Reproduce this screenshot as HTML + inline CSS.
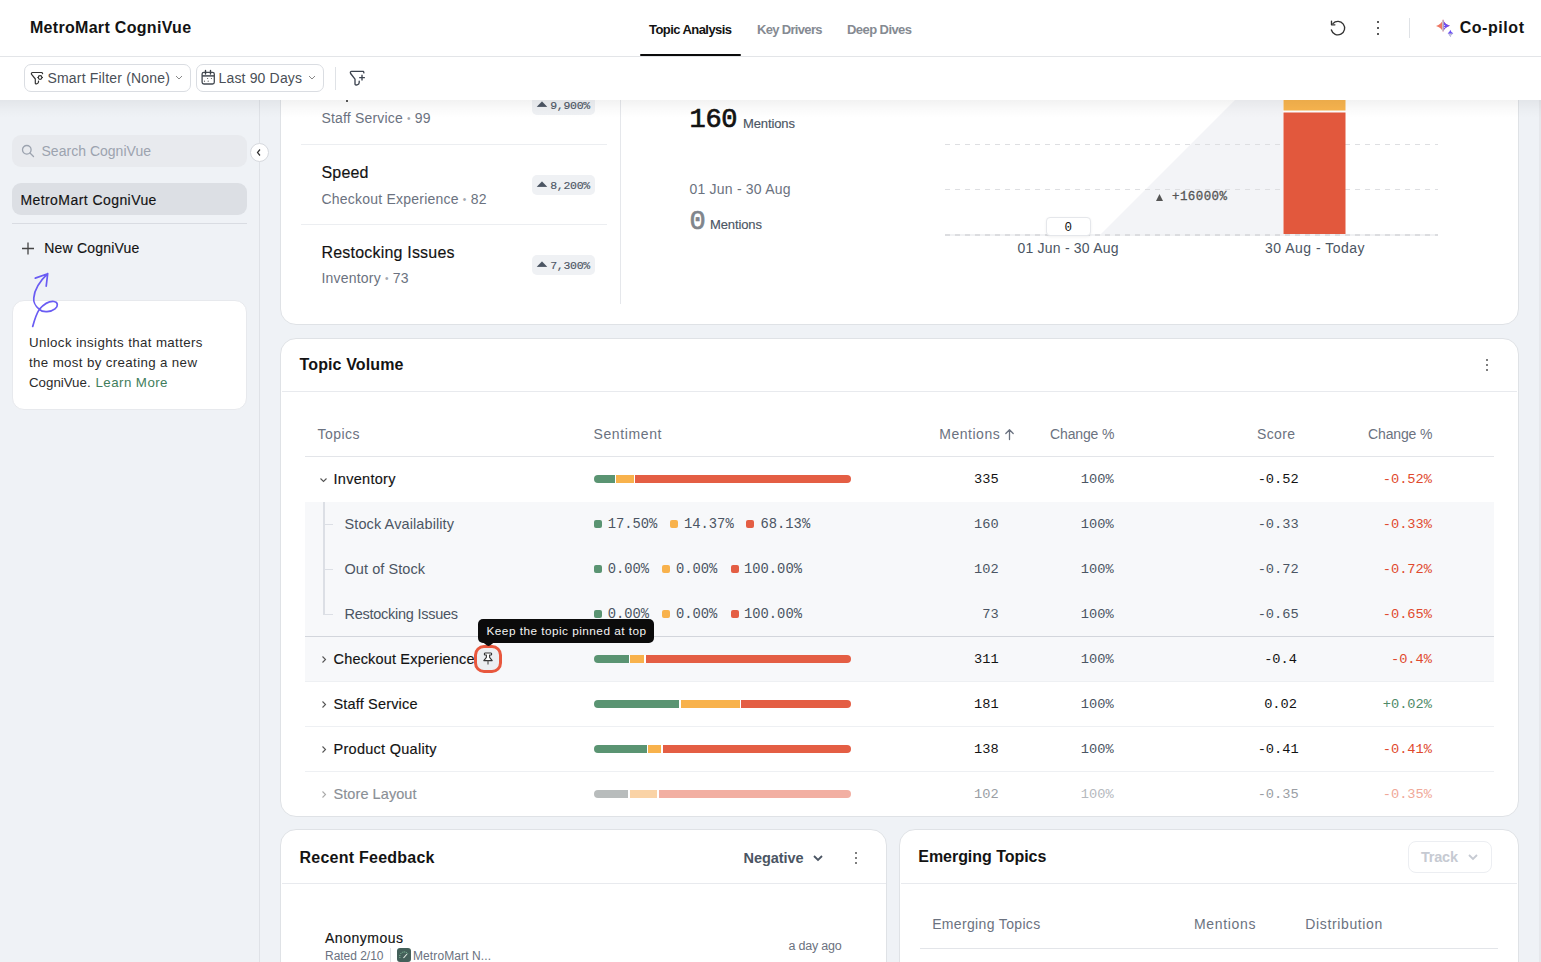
<!DOCTYPE html>
<html><head><meta charset="utf-8"><style>
html,body{margin:0;padding:0;}
body{width:1541px;height:962px;position:relative;overflow:hidden;background:#eff2f6;font-family:"Liberation Sans",sans-serif;}
</style></head><body>
<div style="position:absolute;left:280px;top:40px;width:1239px;height:284.5px;background:#fff;border:1px solid #dfe2e6;border-radius:16px;box-sizing:border-box;"></div>
<span id="t1" style="position:absolute;left:321.50px;top:111.35px;font:400 14.00px/1 'Liberation Sans', sans-serif;color:#6b7280;white-space:nowrap;letter-spacing:0.177px;">Staff Service <span style="color:#a5a9b0;font-size:10px;vertical-align:1px">&#8226;</span> 99</span>
<div style="position:absolute;left:301px;top:144px;width:306px;height:1px;background:#eceef1;"></div>
<span id="t2" style="position:absolute;left:321.50px;top:164.95px;font:500 16.00px/1 'Liberation Sans', sans-serif;color:#131313;white-space:nowrap;letter-spacing:0.182px;-webkit-text-stroke:0.15px #131313;">Speed</span>
<span id="t3" style="position:absolute;left:321.50px;top:191.65px;font:400 14.00px/1 'Liberation Sans', sans-serif;color:#6b7280;white-space:nowrap;letter-spacing:0.219px;">Checkout Experience <span style="color:#a5a9b0;font-size:10px;vertical-align:1px">&#8226;</span> 82</span>
<div style="position:absolute;left:301px;top:224px;width:306px;height:1px;background:#eceef1;"></div>
<span id="t4" style="position:absolute;left:321.50px;top:245.45px;font:500 16.00px/1 'Liberation Sans', sans-serif;color:#131313;white-space:nowrap;letter-spacing:0.198px;-webkit-text-stroke:0.15px #131313;">Restocking Issues</span>
<span id="t5" style="position:absolute;left:321.50px;top:271.15px;font:400 14.00px/1 'Liberation Sans', sans-serif;color:#6b7280;white-space:nowrap;letter-spacing:0.195px;">Inventory <span style="color:#a5a9b0;font-size:10px;vertical-align:1px">&#8226;</span> 73</span>
<div style="position:absolute;left:532px;top:95px;width:63px;height:20px;background:#eff1f4;border-radius:5px;"></div>
<svg style="position:absolute;left:536px;top:100px" width="12" height="8" viewBox="0 0 12 8"><path d="M6 1.8 L10.6 6.5 H1.4 Z" fill="#4b5563" stroke="#4b5563" stroke-width="0.8" stroke-linejoin="round"/></svg>
<span id="t6" style="position:absolute;left:550.20px;top:100.39px;font:400 11.50px/1 'Liberation Mono', monospace;color:#4b5563;white-space:nowrap;letter-spacing:-0.283px;-webkit-text-stroke:0.15px #4b5563;">9,900%</span>
<div style="position:absolute;left:532px;top:175px;width:63px;height:20px;background:#eff1f4;border-radius:5px;"></div>
<svg style="position:absolute;left:536px;top:180px" width="12" height="8" viewBox="0 0 12 8"><path d="M6 1.8 L10.6 6.5 H1.4 Z" fill="#4b5563" stroke="#4b5563" stroke-width="0.8" stroke-linejoin="round"/></svg>
<span id="t7" style="position:absolute;left:550.20px;top:180.39px;font:400 11.50px/1 'Liberation Mono', monospace;color:#4b5563;white-space:nowrap;letter-spacing:-0.283px;-webkit-text-stroke:0.15px #4b5563;">8,200%</span>
<div style="position:absolute;left:532px;top:255px;width:63px;height:20px;background:#eff1f4;border-radius:5px;"></div>
<svg style="position:absolute;left:536px;top:260px" width="12" height="8" viewBox="0 0 12 8"><path d="M6 1.8 L10.6 6.5 H1.4 Z" fill="#4b5563" stroke="#4b5563" stroke-width="0.8" stroke-linejoin="round"/></svg>
<span id="t8" style="position:absolute;left:550.20px;top:260.39px;font:400 11.50px/1 'Liberation Mono', monospace;color:#4b5563;white-space:nowrap;letter-spacing:-0.283px;-webkit-text-stroke:0.15px #4b5563;">7,300%</span>
<div style="position:absolute;left:620px;top:40px;width:1px;height:264px;background:#e5e7eb;"></div>
<span id="t9" style="position:absolute;left:689.50px;top:107.32px;font:400 27.00px/1 'Liberation Mono', monospace;color:#131313;white-space:nowrap;letter-spacing:-0.306px;-webkit-text-stroke:0.7px #131313;">160</span>
<span id="t10" style="position:absolute;left:743.00px;top:116.99px;font:500 13.00px/1 'Liberation Sans', sans-serif;color:#4b5563;white-space:nowrap;letter-spacing:-0.109px;-webkit-text-stroke:0.15px #4b5563;">Mentions</span>
<span id="t11" style="position:absolute;left:689.50px;top:182.15px;font:400 14.00px/1 'Liberation Sans', sans-serif;color:#6b7280;white-space:nowrap;letter-spacing:0.208px;">01 Jun - 30 Aug</span>
<span id="t12" style="position:absolute;left:689.50px;top:208.82px;font:400 27.00px/1 'Liberation Mono', monospace;color:#80858c;white-space:nowrap;-webkit-text-stroke:0.7px #80858c;">0</span>
<span id="t13" style="position:absolute;left:710.00px;top:218.49px;font:500 13.00px/1 'Liberation Sans', sans-serif;color:#4b5563;white-space:nowrap;letter-spacing:-0.109px;-webkit-text-stroke:0.15px #4b5563;">Mentions</span>
<svg style="position:absolute;left:0;top:0" width="1541" height="330"><polygon points="1100,235 1283,235 1283,52" fill="#f3f4f7"/><line x1="945" y1="144.5" x2="1438" y2="144.5" stroke="#dedfe2" stroke-dasharray="5,5"/><line x1="945" y1="189.5" x2="1438" y2="189.5" stroke="#dedfe2" stroke-dasharray="5,5"/><rect x="945" y="234" width="493" height="2" fill="#f1f2f4"/><line x1="945" y1="235" x2="1438" y2="235" stroke="#dcdde0" stroke-width="2" stroke-dasharray="5,5"/><rect x="1283.5" y="40" width="62" height="70.5" fill="#f8b44e"/><rect x="1283.5" y="112.5" width="62" height="121.5" fill="#e2583d"/><path d="M1156 201 L1159.5 194 L1163 201 Z" fill="#555"/></svg>
<span id="t14" style="position:absolute;left:1172.00px;top:191.42px;font:400 12.50px/1 'Liberation Mono', monospace;color:#555;white-space:nowrap;letter-spacing:0.414px;-webkit-text-stroke:0.3px #555;">+16000%</span>
<div style="position:absolute;left:1045.5px;top:217px;width:45px;height:19px;background:#fff;border:1px solid #e5e7eb;border-radius:4px;box-sizing:border-box;box-shadow:0 1px 3px rgba(0,0,0,.06);"></div>
<span id="t15" style="position:absolute;left:1064.50px;top:221.92px;font:400 12.50px/1 'Liberation Mono', monospace;color:#131313;white-space:nowrap;">0</span>
<span id="t16" style="position:absolute;left:1017.50px;top:240.95px;font:400 14.00px/1 'Liberation Sans', sans-serif;color:#4b5563;white-space:nowrap;letter-spacing:0.208px;">01 Jun - 30 Aug</span>
<span id="t17" style="position:absolute;left:1265.00px;top:240.95px;font:400 14.00px/1 'Liberation Sans', sans-serif;color:#4b5563;white-space:nowrap;letter-spacing:0.488px;">30 Aug - Today</span>
<div style="position:absolute;left:280px;top:337.5px;width:1239px;height:479px;background:#fff;border:1px solid #dfe2e6;border-radius:16px;box-sizing:border-box;"></div>
<span id="t18" style="position:absolute;left:299.50px;top:356.65px;font:700 16.00px/1 'Liberation Sans', sans-serif;color:#131313;white-space:nowrap;letter-spacing:0.134px;">Topic Volume</span>
<div style="position:absolute;left:282px;top:391px;width:1235px;height:1px;background:#e8eaee;"></div>
<div style="position:absolute;left:1486px;top:359px;width:2px;height:2px;background:#555;border-radius:1px;"></div>
<div style="position:absolute;left:1486px;top:364px;width:2px;height:2px;background:#555;border-radius:1px;"></div>
<div style="position:absolute;left:1486px;top:369px;width:2px;height:2px;background:#555;border-radius:1px;"></div>
<span id="t19" style="position:absolute;left:317.50px;top:427.45px;font:400 14.00px/1 'Liberation Sans', sans-serif;color:#6b7280;white-space:nowrap;letter-spacing:0.461px;">Topics</span>
<span id="t20" style="position:absolute;left:593.50px;top:427.45px;font:400 14.00px/1 'Liberation Sans', sans-serif;color:#6b7280;white-space:nowrap;letter-spacing:0.619px;">Sentiment</span>
<span id="t21" style="position:absolute;left:939.30px;top:427.45px;font:400 14.00px/1 'Liberation Sans', sans-serif;color:#6b7280;white-space:nowrap;letter-spacing:0.513px;">Mentions</span>
<svg style="position:absolute;left:1004px;top:428px" width="11" height="13" viewBox="0 0 11 13"><path d="M5.5 11.5 V2 M1.8 5.5 L5.5 1.8 L9.2 5.5" fill="none" stroke="#6b7280" stroke-width="1.3" stroke-linecap="round" stroke-linejoin="round"/></svg>
<span id="t22" style="position:absolute;left:1050.00px;top:427.45px;font:400 14.00px/1 'Liberation Sans', sans-serif;color:#6b7280;white-space:nowrap;letter-spacing:-0.126px;">Change %</span>
<span id="t23" style="position:absolute;left:1257.00px;top:427.45px;font:400 14.00px/1 'Liberation Sans', sans-serif;color:#6b7280;white-space:nowrap;letter-spacing:0.354px;">Score</span>
<span id="t24" style="position:absolute;left:1368.00px;top:427.45px;font:400 14.00px/1 'Liberation Sans', sans-serif;color:#6b7280;white-space:nowrap;letter-spacing:-0.126px;">Change %</span>
<div style="position:absolute;left:305px;top:456px;width:1189px;height:1px;background:#e3e5e9;"></div>
<div style="position:absolute;left:305px;top:502px;width:1189px;height:134px;background:#f7f8fa;"></div>
<div style="position:absolute;left:305px;top:636px;width:1189px;height:45px;background:#f7f8fa;"></div>
<div style="position:absolute;left:305px;top:635.5px;width:1189px;height:1px;background:#d3d6dc;"></div>
<div style="position:absolute;left:305px;top:681px;width:1189px;height:1px;background:#eef0f3;"></div>
<div style="position:absolute;left:305px;top:726px;width:1189px;height:1px;background:#eef0f3;"></div>
<div style="position:absolute;left:305px;top:771px;width:1189px;height:1px;background:#eef0f3;"></div>
<div style="position:absolute;left:323px;top:502px;width:1.5px;height:112px;background:#dcdfe5;"></div>
<div style="position:absolute;left:323px;top:523.5px;width:9.5px;height:1.5px;background:#dcdfe5;"></div>
<div style="position:absolute;left:323px;top:568.5px;width:9.5px;height:1.5px;background:#dcdfe5;"></div>
<div style="position:absolute;left:323px;top:613.5px;width:9.5px;height:1.5px;background:#dcdfe5;"></div>
<span id="t25" style="position:absolute;left:333.50px;top:472.32px;font:500 14.50px/1 'Liberation Sans', sans-serif;color:#131313;white-space:nowrap;letter-spacing:0.294px;-webkit-text-stroke:0.15px #131313;">Inventory</span>
<svg style="position:absolute;left:319px;top:476.6px" width="9" height="6" viewBox="0 0 9 6"><path d="M1.5 1.5 L4.5 4.5 L7.5 1.5" fill="none" stroke="#555" stroke-width="1.1"/></svg>
<span id="t26" style="position:absolute;left:344.50px;top:517.32px;font:400 14.50px/1 'Liberation Sans', sans-serif;color:#4b5563;white-space:nowrap;letter-spacing:0.104px;">Stock Availability</span>
<span id="t27" style="position:absolute;left:344.50px;top:562.32px;font:400 14.50px/1 'Liberation Sans', sans-serif;color:#4b5563;white-space:nowrap;letter-spacing:0.064px;">Out of Stock</span>
<span id="t28" style="position:absolute;left:344.50px;top:607.32px;font:400 14.50px/1 'Liberation Sans', sans-serif;color:#4b5563;white-space:nowrap;letter-spacing:-0.261px;">Restocking Issues</span>
<span id="t29" style="position:absolute;left:333.50px;top:652.32px;font:500 14.50px/1 'Liberation Sans', sans-serif;color:#131313;white-space:nowrap;letter-spacing:0.176px;-webkit-text-stroke:0.15px #131313;">Checkout Experience</span>
<svg style="position:absolute;left:321px;top:655.1px" width="6" height="9" viewBox="0 0 6 9"><path d="M1.5 1.5 L4.5 4.5 L1.5 7.5" fill="none" stroke="#555" stroke-width="1.1"/></svg>
<span id="t30" style="position:absolute;left:333.50px;top:697.32px;font:500 14.50px/1 'Liberation Sans', sans-serif;color:#131313;white-space:nowrap;letter-spacing:0.171px;-webkit-text-stroke:0.15px #131313;">Staff Service</span>
<svg style="position:absolute;left:321px;top:700.1px" width="6" height="9" viewBox="0 0 6 9"><path d="M1.5 1.5 L4.5 4.5 L1.5 7.5" fill="none" stroke="#555" stroke-width="1.1"/></svg>
<span id="t31" style="position:absolute;left:333.50px;top:742.32px;font:500 14.50px/1 'Liberation Sans', sans-serif;color:#131313;white-space:nowrap;letter-spacing:0.276px;-webkit-text-stroke:0.15px #131313;">Product Quality</span>
<svg style="position:absolute;left:321px;top:745.1px" width="6" height="9" viewBox="0 0 6 9"><path d="M1.5 1.5 L4.5 4.5 L1.5 7.5" fill="none" stroke="#555" stroke-width="1.1"/></svg>
<span id="t32" style="position:absolute;left:333.50px;top:787.32px;font:500 14.50px/1 'Liberation Sans', sans-serif;color:#8a8f96;white-space:nowrap;letter-spacing:0.071px;-webkit-text-stroke:0.15px #8a8f96;">Store Layout</span>
<svg style="position:absolute;left:321px;top:790.1px" width="6" height="9" viewBox="0 0 6 9"><path d="M1.5 1.5 L4.5 4.5 L1.5 7.5" fill="none" stroke="#aaa" stroke-width="1.1"/></svg>
<div style="position:absolute;left:594px;top:475px;width:257px;height:8px;border-radius:4px;overflow:hidden;background:#fff"><div style="position:absolute;left:0px;top:0;width:21px;height:8px;background:#5a9472"></div><div style="position:absolute;left:22px;top:0;width:18px;height:8px;background:#f8b24c"></div><div style="position:absolute;left:41px;top:0;width:216px;height:8px;background:#e45e44"></div></div>
<div style="position:absolute;left:594px;top:655px;width:257px;height:8px;border-radius:4px;overflow:hidden;background:#fff"><div style="position:absolute;left:0px;top:0;width:35px;height:8px;background:#5a9472"></div><div style="position:absolute;left:36px;top:0;width:14px;height:8px;background:#f8b24c"></div><div style="position:absolute;left:52px;top:0;width:205px;height:8px;background:#e45e44"></div></div>
<div style="position:absolute;left:594px;top:700px;width:257px;height:8px;border-radius:4px;overflow:hidden;background:#fff"><div style="position:absolute;left:0px;top:0;width:85px;height:8px;background:#5a9472"></div><div style="position:absolute;left:87px;top:0;width:59px;height:8px;background:#f8b24c"></div><div style="position:absolute;left:147px;top:0;width:110px;height:8px;background:#e45e44"></div></div>
<div style="position:absolute;left:594px;top:745px;width:257px;height:8px;border-radius:4px;overflow:hidden;background:#fff"><div style="position:absolute;left:0px;top:0;width:53px;height:8px;background:#5a9472"></div><div style="position:absolute;left:54px;top:0;width:13px;height:8px;background:#f8b24c"></div><div style="position:absolute;left:69px;top:0;width:188px;height:8px;background:#e45e44"></div></div>
<div style="position:absolute;left:594px;top:790px;width:257px;height:8px;border-radius:4px;overflow:hidden;background:#fff"><div style="position:absolute;left:0px;top:0;width:34px;height:8px;background:#b8bcbc"></div><div style="position:absolute;left:36px;top:0;width:27px;height:8px;background:#fad3a6"></div><div style="position:absolute;left:65px;top:0;width:192px;height:8px;background:#f2afa2"></div></div>
<div style="position:absolute;left:594px;top:520px;width:8px;height:8px;background:#5a9472;border-radius:2px;"></div>
<span id="t33" style="position:absolute;left:607.70px;top:518.43px;font:400 13.80px/1 'Liberation Mono', monospace;color:#4b5563;white-space:nowrap;">17.50%</span>
<div style="position:absolute;left:670px;top:520px;width:8px;height:8px;background:#f8b24c;border-radius:2px;"></div>
<span id="t34" style="position:absolute;left:684.00px;top:518.43px;font:400 13.80px/1 'Liberation Mono', monospace;color:#4b5563;white-space:nowrap;">14.37%</span>
<div style="position:absolute;left:746px;top:520px;width:8px;height:8px;background:#e45e44;border-radius:2px;"></div>
<span id="t35" style="position:absolute;left:760.50px;top:518.43px;font:400 13.80px/1 'Liberation Mono', monospace;color:#4b5563;white-space:nowrap;">68.13%</span>
<div style="position:absolute;left:594px;top:565px;width:8px;height:8px;background:#5a9472;border-radius:2px;"></div>
<span id="t36" style="position:absolute;left:607.70px;top:563.43px;font:400 13.80px/1 'Liberation Mono', monospace;color:#4b5563;white-space:nowrap;">0.00%</span>
<div style="position:absolute;left:662px;top:565px;width:8px;height:8px;background:#f8b24c;border-radius:2px;"></div>
<span id="t37" style="position:absolute;left:676.00px;top:563.43px;font:400 13.80px/1 'Liberation Mono', monospace;color:#4b5563;white-space:nowrap;">0.00%</span>
<div style="position:absolute;left:730.5px;top:565px;width:8px;height:8px;background:#e45e44;border-radius:2px;"></div>
<span id="t38" style="position:absolute;left:744.00px;top:563.43px;font:400 13.80px/1 'Liberation Mono', monospace;color:#4b5563;white-space:nowrap;">100.00%</span>
<div style="position:absolute;left:594px;top:610px;width:8px;height:8px;background:#5a9472;border-radius:2px;"></div>
<span id="t39" style="position:absolute;left:607.70px;top:608.43px;font:400 13.80px/1 'Liberation Mono', monospace;color:#4b5563;white-space:nowrap;">0.00%</span>
<div style="position:absolute;left:662px;top:610px;width:8px;height:8px;background:#f8b24c;border-radius:2px;"></div>
<span id="t40" style="position:absolute;left:676.00px;top:608.43px;font:400 13.80px/1 'Liberation Mono', monospace;color:#4b5563;white-space:nowrap;">0.00%</span>
<div style="position:absolute;left:730.5px;top:610px;width:8px;height:8px;background:#e45e44;border-radius:2px;"></div>
<span id="t41" style="position:absolute;left:744.00px;top:608.43px;font:400 13.80px/1 'Liberation Mono', monospace;color:#4b5563;white-space:nowrap;">100.00%</span>
<span id="t42" style="position:absolute;right:542.40px;top:473.10px;font:400 13.70px/1 'Liberation Mono', monospace;color:#131313;white-space:nowrap;">335</span>
<span id="t43" style="position:absolute;right:427.40px;top:473.10px;font:400 13.70px/1 'Liberation Mono', monospace;color:#4b5563;white-space:nowrap;">100%</span>
<span id="t44" style="position:absolute;right:242.30px;top:473.10px;font:400 13.70px/1 'Liberation Mono', monospace;color:#131313;white-space:nowrap;">-0.52</span>
<span id="t45" style="position:absolute;right:109.00px;top:473.10px;font:400 13.70px/1 'Liberation Mono', monospace;color:#e0492d;white-space:nowrap;">-0.52%</span>
<span id="t46" style="position:absolute;right:542.40px;top:518.10px;font:400 13.70px/1 'Liberation Mono', monospace;color:#4b5563;white-space:nowrap;">160</span>
<span id="t47" style="position:absolute;right:427.40px;top:518.10px;font:400 13.70px/1 'Liberation Mono', monospace;color:#4b5563;white-space:nowrap;">100%</span>
<span id="t48" style="position:absolute;right:242.30px;top:518.10px;font:400 13.70px/1 'Liberation Mono', monospace;color:#4b5563;white-space:nowrap;">-0.33</span>
<span id="t49" style="position:absolute;right:109.00px;top:518.10px;font:400 13.70px/1 'Liberation Mono', monospace;color:#e0492d;white-space:nowrap;">-0.33%</span>
<span id="t50" style="position:absolute;right:542.40px;top:563.10px;font:400 13.70px/1 'Liberation Mono', monospace;color:#4b5563;white-space:nowrap;">102</span>
<span id="t51" style="position:absolute;right:427.40px;top:563.10px;font:400 13.70px/1 'Liberation Mono', monospace;color:#4b5563;white-space:nowrap;">100%</span>
<span id="t52" style="position:absolute;right:242.30px;top:563.10px;font:400 13.70px/1 'Liberation Mono', monospace;color:#4b5563;white-space:nowrap;">-0.72</span>
<span id="t53" style="position:absolute;right:109.00px;top:563.10px;font:400 13.70px/1 'Liberation Mono', monospace;color:#e0492d;white-space:nowrap;">-0.72%</span>
<span id="t54" style="position:absolute;right:542.40px;top:608.10px;font:400 13.70px/1 'Liberation Mono', monospace;color:#4b5563;white-space:nowrap;">73</span>
<span id="t55" style="position:absolute;right:427.40px;top:608.10px;font:400 13.70px/1 'Liberation Mono', monospace;color:#4b5563;white-space:nowrap;">100%</span>
<span id="t56" style="position:absolute;right:242.30px;top:608.10px;font:400 13.70px/1 'Liberation Mono', monospace;color:#4b5563;white-space:nowrap;">-0.65</span>
<span id="t57" style="position:absolute;right:109.00px;top:608.10px;font:400 13.70px/1 'Liberation Mono', monospace;color:#e0492d;white-space:nowrap;">-0.65%</span>
<span id="t58" style="position:absolute;right:542.40px;top:653.10px;font:400 13.70px/1 'Liberation Mono', monospace;color:#131313;white-space:nowrap;">311</span>
<span id="t59" style="position:absolute;right:427.40px;top:653.10px;font:400 13.70px/1 'Liberation Mono', monospace;color:#4b5563;white-space:nowrap;">100%</span>
<span id="t60" style="position:absolute;right:244.00px;top:653.10px;font:400 13.70px/1 'Liberation Mono', monospace;color:#131313;white-space:nowrap;">-0.4</span>
<span id="t61" style="position:absolute;right:109.00px;top:653.10px;font:400 13.70px/1 'Liberation Mono', monospace;color:#e0492d;white-space:nowrap;">-0.4%</span>
<span id="t62" style="position:absolute;right:542.40px;top:698.10px;font:400 13.70px/1 'Liberation Mono', monospace;color:#131313;white-space:nowrap;">181</span>
<span id="t63" style="position:absolute;right:427.40px;top:698.10px;font:400 13.70px/1 'Liberation Mono', monospace;color:#4b5563;white-space:nowrap;">100%</span>
<span id="t64" style="position:absolute;right:244.00px;top:698.10px;font:400 13.70px/1 'Liberation Mono', monospace;color:#131313;white-space:nowrap;">0.02</span>
<span id="t65" style="position:absolute;right:109.00px;top:698.10px;font:400 13.70px/1 'Liberation Mono', monospace;color:#4f8a68;white-space:nowrap;">+0.02%</span>
<span id="t66" style="position:absolute;right:542.40px;top:743.10px;font:400 13.70px/1 'Liberation Mono', monospace;color:#131313;white-space:nowrap;">138</span>
<span id="t67" style="position:absolute;right:427.40px;top:743.10px;font:400 13.70px/1 'Liberation Mono', monospace;color:#4b5563;white-space:nowrap;">100%</span>
<span id="t68" style="position:absolute;right:242.30px;top:743.10px;font:400 13.70px/1 'Liberation Mono', monospace;color:#131313;white-space:nowrap;">-0.41</span>
<span id="t69" style="position:absolute;right:109.00px;top:743.10px;font:400 13.70px/1 'Liberation Mono', monospace;color:#e0492d;white-space:nowrap;">-0.41%</span>
<span id="t70" style="position:absolute;right:542.40px;top:788.10px;font:400 13.70px/1 'Liberation Mono', monospace;color:#9a9ea4;white-space:nowrap;">102</span>
<span id="t71" style="position:absolute;right:427.40px;top:788.10px;font:400 13.70px/1 'Liberation Mono', monospace;color:#b5b9be;white-space:nowrap;">100%</span>
<span id="t72" style="position:absolute;right:242.30px;top:788.10px;font:400 13.70px/1 'Liberation Mono', monospace;color:#9a9ea4;white-space:nowrap;">-0.35</span>
<span id="t73" style="position:absolute;right:109.00px;top:788.10px;font:400 13.70px/1 'Liberation Mono', monospace;color:#f0a898;white-space:nowrap;">-0.35%</span>
<div style="position:absolute;left:474px;top:644.7px;width:28px;height:28.3px;border:3px solid #e8573d;border-radius:10px;box-sizing:border-box;background:#eceef1;"></div>
<svg style="position:absolute;left:480px;top:650px" width="16" height="16" viewBox="0 0 16 16"><path d="M5 3 H11 C11.9 3 11.9 5 11 5 H9.6 V7.3 L12.2 10.6 H3.8 L6.4 7.3 V5 H5 C4.1 5 4.1 3 5 3 Z" fill="#fff" stroke="#333" stroke-width="1.1" stroke-linejoin="round"/><path d="M8 10.6 V14.5" stroke="#555" stroke-width="1.2"/></svg>
<div style="position:absolute;left:478px;top:619.3px;width:176px;height:23.5px;background:#0b0b0b;border-radius:5px;z-index:5;"></div>
<svg style="position:absolute;left:482px;top:642px;z-index:5" width="13" height="4" viewBox="0 0 13 4"><path d="M0.5 0 L5 3.6 Q6.5 4.4 8 3.6 L12.5 0 Z" fill="#0b0b0b"/></svg>
<span id="t74" style="position:absolute;left:486.50px;top:626.21px;font:400 11.80px/1 'Liberation Sans', sans-serif;color:#f4f4f4;white-space:nowrap;letter-spacing:0.466px;z-index:6;">Keep the topic pinned at top</span>
<div style="position:absolute;left:280px;top:829px;width:607px;height:200px;background:#fff;border:1px solid #dfe2e6;border-radius:16px;box-sizing:border-box;"></div>
<span id="t75" style="position:absolute;left:299.50px;top:850.45px;font:700 16.00px/1 'Liberation Sans', sans-serif;color:#131313;white-space:nowrap;letter-spacing:0.241px;">Recent Feedback</span>
<span id="t76" style="position:absolute;left:743.60px;top:851.02px;font:700 14.50px/1 'Liberation Sans', sans-serif;color:#4b5563;white-space:nowrap;letter-spacing:-0.064px;">Negative</span>
<svg style="position:absolute;left:812px;top:854px" width="12" height="8" viewBox="0 0 12 8"><path d="M2 2 L6 6 L10 2" fill="none" stroke="#4b5563" stroke-width="1.8"/></svg>
<div style="position:absolute;left:855px;top:852px;width:2px;height:2px;background:#555;border-radius:1px;"></div>
<div style="position:absolute;left:855px;top:857px;width:2px;height:2px;background:#555;border-radius:1px;"></div>
<div style="position:absolute;left:855px;top:862px;width:2px;height:2px;background:#555;border-radius:1px;"></div>
<div style="position:absolute;left:282px;top:883px;width:604px;height:1px;background:#e8eaee;"></div>
<span id="t77" style="position:absolute;left:325.00px;top:930.75px;font:500 14.00px/1 'Liberation Sans', sans-serif;color:#131313;white-space:nowrap;letter-spacing:0.508px;-webkit-text-stroke:0.15px #131313;">Anonymous</span>
<span id="t78" style="position:absolute;left:325.00px;top:950.04px;font:400 12.00px/1 'Liberation Sans', sans-serif;color:#6b7280;white-space:nowrap;letter-spacing:-0.025px;">Rated 2/10</span>
<div style="position:absolute;left:390px;top:948px;width:1px;height:14px;background:#e0e2e6;"></div>
<div style="position:absolute;left:397px;top:948px;width:14px;height:14px;background:#44605a;border-radius:3px;"></div>
<svg style="position:absolute;left:397px;top:948px" width="14" height="14" viewBox="0 0 14 14"><path d="M3 10 A4.5 4.5 0 0 1 11 6" fill="none" stroke="#8fd3a8" stroke-width="1" stroke-dasharray="1,1"/><path d="M6.5 10 L10 6" stroke="#e8efe9" stroke-width="1.1"/></svg>
<span id="t79" style="position:absolute;left:413.00px;top:950.04px;font:400 12.00px/1 'Liberation Sans', sans-serif;color:#6b7280;white-space:nowrap;letter-spacing:0.101px;">MetroMart N...</span>
<span id="t80" style="position:absolute;left:788.60px;top:940.42px;font:400 12.50px/1 'Liberation Sans', sans-serif;color:#6b7280;white-space:nowrap;letter-spacing:-0.239px;">a day ago</span>
<div style="position:absolute;left:899px;top:829px;width:620px;height:200px;background:#fff;border:1px solid #dfe2e6;border-radius:16px;box-sizing:border-box;"></div>
<span id="t81" style="position:absolute;left:918.30px;top:849.45px;font:700 16.00px/1 'Liberation Sans', sans-serif;color:#131313;white-space:nowrap;letter-spacing:-0.044px;">Emerging Topics</span>
<div style="position:absolute;left:1407.5px;top:841px;width:84px;height:31.5px;border:1px solid #eceef2;border-radius:8px;box-sizing:border-box;"></div>
<span id="t82" style="position:absolute;left:1421.00px;top:849.72px;font:700 14.50px/1 'Liberation Sans', sans-serif;color:#c6cad2;white-space:nowrap;letter-spacing:-0.225px;">Track</span>
<svg style="position:absolute;left:1467px;top:853px" width="12" height="8" viewBox="0 0 12 8"><path d="M2 2 L6 6 L10 2" fill="none" stroke="#c6cad2" stroke-width="1.8"/></svg>
<div style="position:absolute;left:901px;top:883px;width:616px;height:1px;background:#e8eaee;"></div>
<span id="t83" style="position:absolute;left:932.20px;top:917.15px;font:400 14.00px/1 'Liberation Sans', sans-serif;color:#6b7280;white-space:nowrap;letter-spacing:0.340px;">Emerging Topics</span>
<span id="t84" style="position:absolute;left:1194.00px;top:917.15px;font:400 14.00px/1 'Liberation Sans', sans-serif;color:#6b7280;white-space:nowrap;letter-spacing:0.670px;">Mentions</span>
<span id="t85" style="position:absolute;left:1305.30px;top:917.15px;font:400 14.00px/1 'Liberation Sans', sans-serif;color:#6b7280;white-space:nowrap;letter-spacing:0.634px;">Distribution</span>
<div style="position:absolute;left:920px;top:948px;width:578px;height:1px;background:#e3e5e9;"></div>
<div style="position:absolute;left:1539px;top:100px;width:2px;height:862px;background:#e6e8ec;"></div>
<div style="position:absolute;left:0px;top:100px;width:259px;height:862px;background:#eff2f6;border-right:1px solid #dfe2e7;z-index:10;"></div>
<div style="position:absolute;left:0;top:0;width:260px;height:962px;z-index:11">
<div style="position:absolute;left:12px;top:135px;width:235px;height:32px;background:#e8eaee;border-radius:9px;"></div>
<svg style="position:absolute;left:21px;top:144px" width="14" height="14" viewBox="0 0 14 14"><circle cx="5.8" cy="5.8" r="4.3" fill="none" stroke="#9ca3af" stroke-width="1.3"/><path d="M9 9 L12.5 12.5" stroke="#9ca3af" stroke-width="1.3" stroke-linecap="round"/></svg>
<span id="t86" style="position:absolute;left:41.50px;top:144.45px;font:400 14.00px/1 'Liberation Sans', sans-serif;color:#9ca3af;white-space:nowrap;letter-spacing:0.019px;">Search CogniVue</span>
<div style="position:absolute;left:12px;top:183px;width:235px;height:32px;background:#dcdfe4;border-radius:9px;"></div>
<span id="t87" style="position:absolute;left:20.40px;top:192.65px;font:500 14.00px/1 'Liberation Sans', sans-serif;color:#131313;white-space:nowrap;letter-spacing:0.433px;-webkit-text-stroke:0.15px #131313;">MetroMart CogniVue</span>
<div style="position:absolute;left:12px;top:223px;width:235px;height:1px;background:#d9dce2;"></div>
<svg style="position:absolute;left:21px;top:242px" width="14" height="13" viewBox="0 0 14 13"><path d="M7 0.5 V12.5 M1 6.5 H13" stroke="#444" stroke-width="1.3"/></svg>
<span id="t88" style="position:absolute;left:44.30px;top:241.45px;font:500 14.00px/1 'Liberation Sans', sans-serif;color:#131313;white-space:nowrap;letter-spacing:0.194px;-webkit-text-stroke:0.15px #131313;">New CogniVue</span>
<div style="position:absolute;left:12px;top:300px;width:235px;height:110px;background:#fff;border:1px solid #e7e9ed;border-radius:12px;box-sizing:border-box;"></div>
<span id="t89" style="position:absolute;left:29.00px;top:335.54px;font:400 13.30px/1 'Liberation Sans', sans-serif;color:#2b2b2b;white-space:nowrap;letter-spacing:0.376px;">Unlock insights that matters</span>
<span id="t90" style="position:absolute;left:29.00px;top:355.74px;font:400 13.30px/1 'Liberation Sans', sans-serif;color:#2b2b2b;white-space:nowrap;letter-spacing:0.363px;">the most by creating a new</span>
<span id="t91" style="position:absolute;left:29.00px;top:376.14px;font:400 13.30px/1 'Liberation Sans', sans-serif;color:#2b2b2b;white-space:nowrap;">CogniVue.</span>
<span id="t92" style="position:absolute;left:95.50px;top:376.14px;font:400 13.30px/1 'Liberation Sans', sans-serif;color:#3f7d5c;white-space:nowrap;letter-spacing:0.445px;">Learn More</span>
<svg style="position:absolute;left:0;top:0" width="70" height="340"><path d="M32.7 326.5 C35 318, 37 313, 39.3 309.4 C44 304, 50 301, 54 301.5 C58 302, 58.5 306, 55 308.8 C51 312, 43 313, 39.3 309.4 C35 306, 33.3 301, 33.8 297.8 C34.5 290, 40 281, 47.7 273.7 M35.3 278.1 L47.7 273.7 L46.2 286.1" fill="none" stroke="#6a5cf3" stroke-width="1.7" stroke-linecap="round" stroke-linejoin="round"/></svg>
</div>
<div style="position:absolute;left:249.5px;top:143px;width:19px;height:19px;border:1px solid #d6d9de;border-radius:50%;background:#fff;box-sizing:border-box;z-index:12"></div>
<svg style="position:absolute;left:255px;top:148px;z-index:13" width="8" height="9" viewBox="0 0 8 9"><path d="M5 1.5 L2.5 4.5 L5 7.5" fill="none" stroke="#333" stroke-width="1.2"/></svg>
<div style="position:absolute;left:0;top:0;width:1541px;height:100px;background:#fff;z-index:20;"></div>
<div style="position:absolute;left:0;top:100px;width:1541px;height:18px;z-index:19;background:linear-gradient(rgba(0,0,0,0.05),rgba(0,0,0,0.018) 50%,rgba(0,0,0,0))"></div>
<div style="position:absolute;left:345.5px;top:100px;width:2.5px;height:1.6px;background:#222;border-radius:1px;z-index:19;"></div>
<div style="position:absolute;left:0px;top:56px;width:1541px;height:1px;background:#e3e5e8;z-index:21;"></div>
<span id="t93" style="position:absolute;left:29.90px;top:20.05px;font:700 16.00px/1 'Liberation Sans', sans-serif;color:#131313;white-space:nowrap;letter-spacing:0.314px;z-index:22;">MetroMart CogniVue</span>
<span id="t94" style="position:absolute;left:649.00px;top:22.79px;font:700 13.00px/1 'Liberation Sans', sans-serif;color:#131313;white-space:nowrap;letter-spacing:-0.562px;z-index:22;">Topic Analysis</span>
<span id="t95" style="position:absolute;left:757.00px;top:22.79px;font:700 13.00px/1 'Liberation Sans', sans-serif;color:#858a92;white-space:nowrap;letter-spacing:-0.677px;z-index:22;">Key Drivers</span>
<span id="t96" style="position:absolute;left:847.00px;top:22.79px;font:700 13.00px/1 'Liberation Sans', sans-serif;color:#858a92;white-space:nowrap;letter-spacing:-0.566px;z-index:22;">Deep Dives</span>
<div style="position:absolute;left:640px;top:53.5px;width:101px;height:2.5px;background:#0b0b0b;z-index:22;border-radius:1px;"></div>
<svg style="position:absolute;left:1328px;top:18px;z-index:22" width="20" height="20" viewBox="0 0 20 20"><path d="M4.9 5.6 A6.75 6.75 0 1 1 3.4 12" fill="none" stroke="#333" stroke-width="1.35" stroke-linecap="round"/><path d="M3.5 3.2 V6.8 H6.9" fill="none" stroke="#333" stroke-width="1.35" stroke-linecap="round" stroke-linejoin="round"/></svg>
<div style="position:absolute;left:1377px;top:21.1px;width:2px;height:2px;background:#222;border-radius:50%;z-index:22;"></div>
<div style="position:absolute;left:1377px;top:27.1px;width:2px;height:2px;background:#222;border-radius:50%;z-index:22;"></div>
<div style="position:absolute;left:1377px;top:33.1px;width:2px;height:2px;background:#222;border-radius:50%;z-index:22;"></div>
<div style="position:absolute;left:1408.5px;top:18px;width:1px;height:20px;background:#dfe2e6;z-index:22;"></div>
<svg style="position:absolute;left:1430px;top:14px;z-index:22" width="26" height="26" viewBox="0 0 26 26"><defs><clipPath id="cr"><rect x="13.5" y="0" width="13" height="26"/></clipPath><clipPath id="cb"><rect x="0" y="19.6" width="26" height="7"/></clipPath></defs><path d="M13 5.2 Q14.6 10.2 20 11.7 Q14.6 13.2 13 18 Q11.4 13.3 6 11.9 Q11.4 10.4 13 5.2 Z" fill="#ee7864"/><path d="M13 5.2 Q14.6 10.2 20 11.7 Q14.6 13.2 13 18 Q11.4 13.3 6 11.9 Q11.4 10.4 13 5.2 Z" fill="#6b4ff6" clip-path="url(#cr)"/><rect x="12.1" y="6.5" width="1.4" height="10.5" fill="#c5c8d2"/><circle cx="14.6" cy="11.5" r="0.5" fill="#fff"/><circle cx="14.6" cy="13.5" r="0.5" fill="#fff"/><path d="M20.3 15.8 Q21.1 18.5 23.3 19.3 Q21.1 20.2 20.3 23 Q19.5 20.2 17.7 19.3 Q19.5 18.5 20.3 15.8 Z" fill="#6b4ff6"/><path d="M20.3 15.8 Q21.1 18.5 23.3 19.3 Q21.1 20.2 20.3 23 Q19.5 20.2 17.7 19.3 Q19.5 18.5 20.3 15.8 Z" fill="#c5c8d2" clip-path="url(#cb)"/></svg>
<span id="t97" style="position:absolute;left:1459.70px;top:20.05px;font:700 16.00px/1 'Liberation Sans', sans-serif;color:#131313;white-space:nowrap;letter-spacing:0.553px;z-index:22;">Co-pilot</span>
<div style="position:absolute;left:24px;top:64px;width:166.5px;height:27.5px;border:1px solid #dadde2;border-radius:7px;box-sizing:border-box;z-index:22;"></div>
<svg style="position:absolute;left:26px;top:66px;z-index:22" width="24" height="24" viewBox="0 0 24 24"><path d="M16.6 7.6 L16 6.5 H6.5 C5.5 6.5 5 7.6 5.6 8.4 L9.3 13 V17.3 C9.3 18.6 12.5 17.5 12.5 16 V15" fill="none" stroke="#333" stroke-width="1.2" stroke-linecap="round" stroke-linejoin="round"/><circle cx="14.1" cy="11.5" r="1.8" fill="none" stroke="#333" stroke-width="1.2"/><path d="M11.3 11.5 H12.3 M15.9 11.5 H17" stroke="#333" stroke-width="1.2"/></svg>
<span id="t98" style="position:absolute;left:47.40px;top:71.15px;font:400 14.00px/1 'Liberation Sans', sans-serif;color:#4a4f57;white-space:nowrap;letter-spacing:0.198px;z-index:22;">Smart Filter (None)</span>
<svg style="position:absolute;left:175px;top:75px;z-index:22" width="8" height="5" viewBox="0 0 8 5"><path d="M1 1 L4 4 L7 1" fill="none" stroke="#888" stroke-width="1"/></svg>
<div style="position:absolute;left:195.5px;top:64px;width:128.5px;height:27.5px;border:1px solid #dadde2;border-radius:7px;box-sizing:border-box;z-index:22;"></div>
<svg style="position:absolute;left:197px;top:66px;z-index:22" width="24" height="24" viewBox="0 0 24 24"><rect x="5.1" y="6.3" width="12.2" height="11.7" rx="1.8" fill="none" stroke="#444a52" stroke-width="1.3"/><path d="M5 9.9 H17.4" stroke="#444a52" stroke-width="1.5"/><path d="M8.5 4.5 V8 M13.5 4.5 V8" stroke="#3a4048" stroke-width="1.4" stroke-linecap="round"/><circle cx="10.6" cy="12.5" r="0.6" fill="#555"/><circle cx="14.4" cy="12.5" r="0.6" fill="#555"/><circle cx="7.5" cy="15.2" r="0.6" fill="#555"/><circle cx="11.2" cy="15.2" r="0.6" fill="#555"/></svg>
<span id="t99" style="position:absolute;left:218.50px;top:71.15px;font:400 14.00px/1 'Liberation Sans', sans-serif;color:#4a4f57;white-space:nowrap;letter-spacing:0.163px;z-index:22;">Last 90 Days</span>
<svg style="position:absolute;left:308px;top:75px;z-index:22" width="8" height="5" viewBox="0 0 8 5"><path d="M1 1 L4 4 L7 1" fill="none" stroke="#888" stroke-width="1"/></svg>
<div style="position:absolute;left:334.5px;top:66.5px;width:1px;height:23.5px;background:#dfe2e6;z-index:22;"></div>
<svg style="position:absolute;left:345px;top:66px;z-index:22" width="24" height="24" viewBox="0 0 24 24"><path d="M18.9 6.8 L18.5 5.3 H6.5 C5.6 5.3 5 6.5 5.6 7.5 L10 13.2 V18 C10 19.8 14.2 19.2 14.2 16.5 V15.2" fill="none" stroke="#3d4450" stroke-width="1.35" stroke-linecap="round" stroke-linejoin="round"/><path d="M17 8.7 V14.5 M14.2 11.6 H19.9" stroke="#3d4450" stroke-width="1.35"/></svg>
</body></html>
